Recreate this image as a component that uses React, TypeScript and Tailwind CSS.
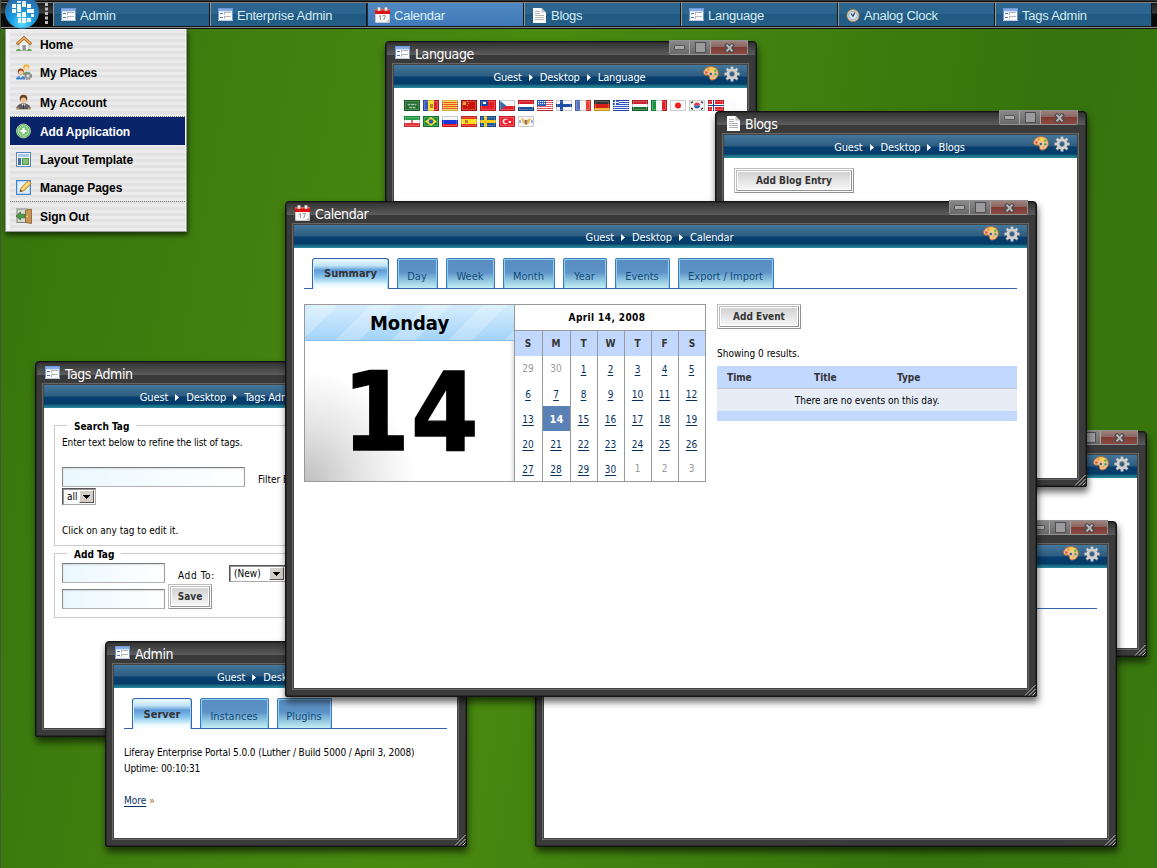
import React, { ReactNode } from "react";

type IconProps = { className?: string };

/* ---------- small icons ---------- */

const PortletIcon = ({ className = "" }: IconProps) => (
  <svg width="15" height="14" viewBox="0 0 15 14" shapeRendering="crispEdges" className={`shrink-0 ${className}`}>
    <rect x="0" y="0" width="15" height="13" fill="#6f97d6" />
    <rect x="1" y="1" width="13" height="2" fill="#88aee8" />
    <rect x="1" y="3" width="13" height="9" fill="#fbfcff" />
    <rect x="1" y="3" width="13" height="1" fill="#d3dff5" />
    <rect x="2" y="5" width="3" height="1" fill="#5476bb" />
    <rect x="2" y="9" width="3" height="1" fill="#5476bb" />
    <rect x="6" y="4" width="7" height="3" fill="#b8b8b8" />
    <rect x="7" y="5" width="6" height="2" fill="#fff" />
    <rect x="6" y="8" width="7" height="3" fill="#b8b8b8" />
    <rect x="7" y="9" width="6" height="2" fill="#fff" />
    <rect x="0" y="12" width="15" height="1" fill="#bfc9dd" />
  </svg>
);

const CalendarIcon = ({ className = "" }: IconProps) => (
  <svg width="15" height="16" viewBox="0 0 15 16" className={`shrink-0 ${className}`}>
    <rect x="0.5" y="6" width="14" height="9.5" rx="0.5" fill="#f4f4f4" stroke="#c8c8c8" />
    <rect x="0" y="2" width="15" height="5" fill="#dc1010" />
    <rect x="0" y="2" width="15" height="1.5" fill="#f25c50" />
    <rect x="2.5" y="0" width="3" height="4" rx="1.2" fill="#eee" stroke="#888" strokeWidth=".6" />
    <rect x="9.5" y="0" width="3" height="4" rx="1.2" fill="#eee" stroke="#888" strokeWidth=".6" />
    <path d="M4 9.5l1.3-1V13M7.5 8.7h3L8.7 13" stroke="#8a8a8a" fill="none" strokeWidth=".9" />
    <path d="M10.5 15.5l4-4v4z" fill="#c9c9c9" />
  </svg>
);

const PageIcon = ({ className = "" }: IconProps) => (
  <svg width="13" height="15" viewBox="0 0 13 15" className={`shrink-0 ${className}`}>
    <path d="M0 0h8.5L13 4.500V15H0z" fill="#fdfdfd" />
    <path d="M8.500 0v4.500H13z" fill="#c5c5c5" />
    <path d="M2 3.500h5M2 5.500h5M2 7.500h9M2 9.500h9M2 11.500h9" stroke="#b4b4b4" strokeWidth="1" />
  </svg>
);

const ClockIcon = () => (
  <svg width="14" height="15" viewBox="0 0 14 15" className="shrink-0">
    <circle cx="7" cy="7.500" r="6.500" fill="#b4905c" />
    <circle cx="7" cy="7.500" r="5.500" fill="#f0dfc0" />
    <circle cx="7" cy="7.500" r="4.400" fill="#cfe2f6" stroke="#7394bd" strokeWidth=".7" />
    <path d="M5 5.500l2 2.600 1.800-3.600" stroke="#2c3b58" strokeWidth="1.100" fill="none" />
  </svg>
);

const PaletteIcon = () => (
  <svg width="16" height="15" viewBox="0 0 16 15">
    <path
      d="M9 .7C4.500.2 1 3 .6 6.200c-.3 2.600 1.800 3.200 3.700 2.900 1.700-.2 2 .8 2.100 2.200.1 1.900 1.300 3 3.600 2.600 3-.5 5.300-3.200 5.400-6.400C15.500 3.700 12.700 1.100 9 .7z"
      fill="#f6c488"
      stroke="#b56a34"
      strokeWidth="1"
    />
    <circle cx="3.400" cy="6.500" r="1.300" fill="#e84a4a" />
    <circle cx="5.600" cy="3.500" r="1.200" fill="#f2923a" />
    <circle cx="9" cy="3" r="1.500" fill="#f9dc1c" />
    <circle cx="12.300" cy="4.800" r="1.300" fill="#56bb45" />
    <circle cx="12.400" cy="8.200" r="1.200" fill="#35a888" />
    <circle cx="10.300" cy="10.800" r="1" fill="#d99a84" />
    <circle cx="7.800" cy="8" r="1.200" fill="#2c5c93" />
  </svg>
);

const teeth = [0, 45, 90, 135, 180, 225, 270, 315];
const GearIcon = () => (
  <svg width="16" height="16" viewBox="0 0 16 16">
    {teeth.map((a) => (
      <path key={a} d="M6.400 3.500L6.800.4h2.400l.4 3.100z" fill="#d2d2d2" stroke="#8d8d8d" strokeWidth=".4" transform={`rotate(${a} 8 8)`} />
    ))}
    <circle cx="8" cy="8" r="3.900" fill="none" stroke="#d2d2d2" strokeWidth="3" />
    <circle cx="8" cy="8" r="2.500" fill="none" stroke="#858585" strokeWidth=".7" />
  </svg>
);

const HomeIcon = () => (
  <svg width="16" height="16" viewBox="0 0 16 16">
    <path d="M3 7v7.500h10V7L8 2.500z" fill="#f1f1ee" stroke="#9a9a92" strokeWidth=".6" />
    <rect x="6.500" y="9" width="3.200" height="5.500" fill="#8f9096" />
    <path d="M.8 8.300L8 1.800l7.200 6.500" fill="none" stroke="#9a5d1d" strokeWidth="3" />
    <path d="M1.200 8L8 1.900 14.800 8" fill="none" stroke="#e0a45c" strokeWidth="1.900" />
    <path d="M0 15c.3-2.600 4-2.800 5 0zM11 15c.6-2.800 4.500-2.600 5 0z" fill="#4ba552" />
  </svg>
);

const PlacesIcon = () => (
  <svg width="16" height="16" viewBox="0 0 16 16">
    <path d="M7 11c0-4.500 7.500-4.500 7.500 0z" fill="#5aa845" />
    <circle cx="10.300" cy="3.200" r="3" fill="#f0b23c" />
    <circle cx="10.500" cy="4.300" r="2" fill="#fbd9b4" />
    <path d="M0 15.500c0-5 9.500-5 9.500 0z" fill="#3f86d8" />
    <path d="M3.500 12l1.300 2 1.400-2z" fill="#fff" />
    <circle cx="4.800" cy="7.500" r="3" fill="#a14a1d" />
    <circle cx="5" cy="8.500" r="2.100" fill="#f7cfa5" />
    <circle cx="12" cy="12" r="3.100" fill="none" stroke="#8e8e8e" strokeWidth="2" strokeDasharray="1.700 .8" />
    <circle cx="12" cy="12" r="2.200" fill="#ddd" stroke="#808080" strokeWidth="1" />
  </svg>
);

const AccountIcon = () => (
  <svg width="15" height="16" viewBox="0 0 15 16">
    <path d="M.8 15c-.8-7 14.200-7 13.400 0z" fill="#606064" stroke="#46464a" strokeWidth=".6" />
    <path d="M5.500 10l2 3.500L9.500 10z" fill="#e2e2e2" />
    <path d="M7.500 10.500v4" stroke="#333" strokeWidth="1.200" />
    <circle cx="7.500" cy="4.500" r="3.800" fill="#6b4423" />
    <circle cx="7.500" cy="6.300" r="2.900" fill="#f0c297" />
    <path d="M0 14.500h3M12 14.500h3" stroke="#c89567" strokeWidth="1.400" />
  </svg>
);

const AddIcon = () => (
  <svg width="15" height="16" viewBox="0 0 15 16">
    <circle cx="7.500" cy="8" r="7" fill="#5fae57" stroke="#b9dfb2" strokeWidth=".8" />
    <circle cx="7.500" cy="8" r="5.300" fill="#7cc172" stroke="#cdebc8" strokeWidth=".9" />
    <path d="M7.500 5v6M4.500 8h6" stroke="#fff" strokeWidth="2.200" />
  </svg>
);

const LayoutIcon = () => (
  <svg width="15" height="15" viewBox="0 0 15 15" shapeRendering="crispEdges">
    <rect width="15" height="15" fill="#5b87bd" />
    <rect x="1" y="1" width="13" height="13" fill="#fff" />
    <rect x="2" y="2" width="11" height="3" fill="#a9c7ea" />
    <rect x="2" y="6" width="3" height="7" fill="#426fae" />
    <rect x="6" y="6" width="7" height="7" fill="#4f9a44" />
    <rect x="7" y="7" width="5" height="5" fill="#82c274" />
  </svg>
);

const EditIcon = () => (
  <svg width="16" height="16" viewBox="0 0 16 16">
    <rect x=".6" y="1.600" width="13.800" height="13.800" fill="#d9ecff" stroke="#3d85cf" strokeWidth="1.200" />
    <path d="M2.500 5h8M2.500 7.500h6M2.500 10h4" stroke="#fff" />
    <path d="M4 12.800l1-4L12.300 1.500l3 3L8 11.700z" fill="#f7c24e" stroke="#b17a1c" strokeWidth=".8" />
    <path d="M6 10.500l7.500-7.500" stroke="#fde7a8" strokeWidth="1.200" />
    <path d="M4 12.800l.6-2.200 1.700 1.600z" fill="#333" />
  </svg>
);

const ExitIcon = () => (
  <svg width="16" height="16" viewBox="0 0 16 16">
    <rect x="1" y="1" width="11" height="13.500" fill="#d7d9d4" stroke="#7f857c" />
    <path d="M9.500 2.500L15.500 1v14.500l-6-1z" fill="#c99555" stroke="#8d5b25" strokeWidth=".8" />
    <circle cx="11" cy="8.500" r=".8" fill="#f9e4a0" />
    <path d="M0 8l4.500-4v2.300H9v3.500H4.500V12z" fill="#4f9a4e" stroke="#2f6b31" strokeWidth=".7" />
  </svg>
);

const Logo = () => (
  <svg width="34" height="29" viewBox="0 0 34 29" className="shrink-0">
    <defs>
      <radialGradient id="orb" cx="50%" cy="85%" r="75%">
        <stop offset="0" stopColor="#5fdcff" />
        <stop offset=".45" stopColor="#1a9be2" />
        <stop offset="1" stopColor="#2b6ba8" />
      </radialGradient>
    </defs>
    <circle cx="17" cy="11.500" r="17" fill="url(#orb)" />
    <g fill="#f4fbff" shapeRendering="crispEdges">
      <path d="M12 1h4v2h-4zM17 1h4v2h-4z" opacity=".85" />
      <path d="M7 4h4v4H7zM12 4h4v4h-4zM17 3h4v4h-4zM22 4h4v4h-4z" />
      <path d="M7 9h4v4H7zM12 8h4v4h-4zM22 9h4v4h-4zM26 9h3v4h-3z" />
      <path d="M12 13h4v4h-4zM17 12h4v5h-4zM26 14h3v3h-3z" />
      <path d="M13 18h3v5h-3zM17 18h4v5h-4zM22 18h4v4h-4z" />
    </g>
  </svg>
);

/* ---------- flags ---------- */

const R = (x: number, y: number, w: number, h: number, f: string) => <rect x={x} y={y} width={w} height={h} fill={f} />;

const flags: ReactNode[] = [
  <g>{R(0, 0, 16, 11, "#1d6a2c")}<path d="M3.500 4.500h9M5 7.500h7" stroke="#a3c6a6" strokeWidth="1.600" strokeDasharray="3 .5" /></g>,
  <g>{R(0, 0, 5, 11, "#3759bb")}{R(5, 0, 6, 11, "#f8dd2e")}{R(11, 0, 5, 11, "#d8222e")}{R(7, 4, 3, 4, "#c47b32")}</g>,
  <g>{R(0, 0, 16, 11, "#fbd24a")}{R(0, 2, 16, 1, "#e8532a")}{R(0, 4, 16, 1, "#e8532a")}{R(0, 6, 16, 1, "#e8532a")}{R(0, 8, 16, 1, "#e8532a")}</g>,
  <g>{R(0, 0, 16, 11, "#c9140c")}{R(2, 2, 3, 3, "#f5a73a")}{R(6, 1, 1, 1, "#f5a73a")}{R(7, 3, 1, 1, "#f5a73a")}{R(6, 5, 1, 1, "#f5a73a")}</g>,
  <g>{R(0, 0, 16, 11, "#e81e26")}{R(0, 0, 8, 6, "#1a45a8")}{R(3, 2, 3, 2, "#fff")}</g>,
  <g>{R(0, 0, 16, 6, "#f6f6f6")}{R(0, 6, 16, 5, "#e02028")}<path d="M0 0l7 5.500L0 11z" fill="#3768a8" /></g>,
  <g>{R(0, 0, 16, 4, "#dd1c2a")}{R(0, 4, 16, 3, "#fff")}{R(0, 7, 16, 4, "#1d4f98")}</g>,
  <g>{R(0, 0, 16, 11, "#fff")}{R(0, 0, 16, 1, "#d2303c")}{R(0, 2, 16, 1, "#e0525c")}{R(0, 4, 16, 1, "#e0525c")}{R(0, 6, 16, 1, "#e0525c")}{R(0, 8, 16, 1, "#e0525c")}{R(0, 10, 16, 1, "#d2303c")}{R(0, 0, 9, 6, "#2a63c8")}<path d="M1 1.500h7M1 3.500h7" stroke="#fff" strokeDasharray="1 1" /></g>,
  <g>{R(0, 0, 16, 11, "#f7f7fb")}{R(4, 0, 3, 11, "#1e4fa3")}{R(0, 4, 16, 3, "#1e4fa3")}</g>,
  <g>{R(0, 0, 5, 11, "#5470c4")}{R(5, 0, 6, 11, "#f6f3f0")}{R(11, 0, 5, 11, "#ee3b34")}</g>,
  <g>{R(0, 0, 16, 4, "#333")}{R(0, 4, 16, 4, "#d62118")}{R(0, 8, 16, 3, "#f2b128")}</g>,
  <g>{R(0, 0, 16, 11, "#f4f6ff")}{R(0, 0, 16, 1, "#2b4fc0")}{R(0, 2, 16, 1, "#2b4fc0")}{R(0, 4, 16, 1, "#2b4fc0")}{R(0, 6, 16, 1, "#2b4fc0")}{R(0, 8, 16, 1, "#2b4fc0")}{R(0, 10, 16, 1, "#2b4fc0")}{R(0, 0, 6, 5, "#2b4fc0")}{R(2, 0, 1, 5, "#fff")}{R(0, 2, 6, 1, "#fff")}</g>,
  <g>{R(0, 0, 16, 4, "#cc2030")}{R(0, 4, 16, 3, "#f5f5f5")}{R(0, 7, 16, 4, "#1e7434")}</g>,
  <g>{R(0, 0, 5, 11, "#1a9340")}{R(5, 0, 6, 11, "#f8f8f8")}{R(11, 0, 5, 11, "#e0212a")}</g>,
  <g>{R(0, 0, 16, 11, "#f8f8f8")}<circle cx="8" cy="5.500" r="3" fill="#f02020" /></g>,
  <g>{R(0, 0, 16, 11, "#f6f6f6")}<path d="M5 5.500a3 3 0 016 0z" fill="#e23a40" /><path d="M5 5.500a3 3 0 006 0z" fill="#2a63b8" /><path d="M2 3l2-1.500M12 1.500L14 3M2 8l2 1.500M12 9.500L14 8" stroke="#222" strokeWidth="1.500" /></g>,
  <g>{R(0, 0, 16, 11, "#e62430")}{R(4, 0, 3, 11, "#fff")}{R(0, 4, 16, 3, "#fff")}{R(5, 0, 1, 11, "#223f92")}{R(0, 5, 16, 1, "#223f92")}</g>,
  <g>{R(0, 0, 16, 4, "#27a04a")}{R(0, 4, 16, 3, "#fbfbfb")}{R(0, 7, 16, 4, "#e4343a")}{R(7, 4, 2, 3, "#e87070")}</g>,
  <g>{R(0, 0, 16, 11, "#188a34")}<path d="M8 1l6 4.500L8 10 2 5.500z" fill="#f6e02c" /><circle cx="8" cy="5.500" r="2.300" fill="#2c58b4" /></g>,
  <g>{R(0, 0, 16, 4, "#f6f6fa")}{R(0, 4, 16, 4, "#1c36d8")}{R(0, 8, 16, 3, "#e81c1c")}</g>,
  <g>{R(0, 0, 16, 3, "#e62a1c")}{R(0, 3, 16, 5, "#fadf1e")}{R(0, 8, 16, 3, "#e62a1c")}{R(4, 4, 3, 3, "#c8743a")}</g>,
  <g>{R(0, 0, 16, 11, "#20559a")}{R(4, 0, 3, 11, "#f6c91e")}{R(0, 4, 16, 3, "#f6c91e")}</g>,
  <g>{R(0, 0, 16, 11, "#f02230")}<circle cx="6.500" cy="5.500" r="2.800" fill="#fff" /><circle cx="7.300" cy="5.500" r="2" fill="#f02230" />{R(10, 5, 2, 2, "#fff")}</g>,
  <g>{R(0, 0, 16, 11, "#f4f4f4")}<path d="M3 2l5 2.500L13 2l-2 5-3 2.500L5 7z" fill="#e6be30" />{R(7, 4, 2, 4, "#8a63b0")}{R(1, 4, 2, 3, "#9aacd8")}{R(13, 4, 2, 3, "#9aacd8")}</g>,
];

const Flag = ({ art }: { art: ReactNode }) => (
  <svg width="16" height="11" viewBox="0 0 16 11">
    {art}
    <rect x="1.500" y="1.500" width="13" height="8" fill="none" stroke="#fff" strokeOpacity=".22" />
    <rect x=".5" y=".5" width="15" height="10" fill="none" stroke="#000" strokeOpacity=".17" />
  </svg>
);

/* ---------- desktop window ---------- */

const WindowButtons = () => (
  <div className="absolute -top-[2px] right-[8px] flex h-[15px] w-[79px] rounded-b-[2px] border border-[#a09c98]/70 bg-[#777]">
    <div className="flex w-[20px] items-center justify-center border-r border-[#a5a5a5] bg-linear-to-b from-[#888] to-[#6a6a6a]">
      <div className="h-[5px] w-[11px] rounded-[1px] border border-[#55585c] bg-[#aaa]" />
    </div>
    <div className="flex w-[21px] items-center justify-center border-r border-[#a5a5a5] bg-linear-to-b from-[#888] to-[#6a6a6a]">
      <div className="size-[11px] border border-[#4a4d52] bg-[#9c9c9c]" />
    </div>
    <div className="flex flex-1 items-center justify-center bg-[linear-gradient(#9c827f_0,#8c6560_45%,#7e3c34_50%,#8a4a43_100%)]">
      <svg width="11" height="10" viewBox="0 0 11 10">
        <path d="M1.500 1L9.500 9M9.500 1L1.500 9" stroke="#484b4f" strokeWidth="4" />
        <path d="M2.500 1.700L8.500 8.300M8.500 1.700L2.500 8.300" stroke="#b8b8b8" strokeWidth="2" />
      </svg>
    </div>
  </div>
);

const Arrow = () => (
  <svg width="4" height="7" viewBox="0 0 4 7" className="-mt-[2px] mr-[7px] ml-[7px]">
    <path d="M0 0l4 3.500L0 7z" fill="#fff" />
  </svg>
);

type WindowProps = { place: string; icon?: ReactNode; title?: string; children?: ReactNode };

function Window({ place, icon, title, children }: WindowProps) {
  return (
    <section
      className={`absolute flex flex-col rounded-t-[4px] rounded-b-[2px] border border-[#141414] bg-[#3a3a3a] pr-[7px] pb-[6px] pl-[6px] shadow-[1px_5px_7px_rgba(0,0,0,0.6),inset_0_0_0_1px_#282828] ${place}`}
    >
      <div className="absolute inset-x-px top-px h-[12px] rounded-t-[3px] bg-linear-to-b from-[#343434] to-[#5d5d5d]" />
      <header className="relative flex h-[21px] shrink-0 items-center pt-[3px] pl-[3px]">
        <span className="-mt-[2px]">{icon}</span>
        <h2 className="ml-[5px] text-[14px] leading-[18px] tracking-[-0.03em] whitespace-nowrap text-white">{title}</h2>
      </header>
      <WindowButtons />
      <div className="flex min-h-0 flex-1 flex-col border border-[#666] bg-[#444] p-px">
        <nav className="flex h-[23px] shrink-0 bg-[linear-gradient(#44779b_0,#2d5c81_11px,#053e6e_12px,#063c68_19px,#14627f_20px,#2b8ba0_23px)]">
          <div className="flex-1" />
          <div className="-mr-[5px] flex items-center pt-[4px] text-[11px] tracking-[-0.012em] whitespace-nowrap text-white">
            {title && (
              <>
                Guest
                <Arrow />
                Desktop
                <Arrow />
                {title}
              </>
            )}
          </div>
          <div className="flex flex-1 justify-end gap-[5px] pt-px pr-[7px]">
            <PaletteIcon />
            <GearIcon />
          </div>
        </nav>
        <div className="min-h-0 flex-1 overflow-hidden bg-white">{children}</div>
      </div>
      <svg width="12" height="12" viewBox="0 0 12 12" className="absolute right-0 bottom-0">
        <path d="M1 11.500L11.500 1M5 11.500L11.500 5M8.500 11.500l3-3" stroke="#222" strokeWidth="2" />
        <path d="M1 11.500L11.500 1M5 11.500L11.500 5M8.500 11.500l3-3" stroke="#d8d8d8" strokeWidth="1" />
      </svg>
    </section>
  );
}

/* ---------- form pieces ---------- */

const PushButton = ({ children, size }: { children: ReactNode; size: string }) => (
  <button
    className={`block border-[3px] border-double border-t-[#bdbdbd] border-r-[#929292] border-b-[#929292] border-l-[#bdbdbd] bg-linear-to-b from-[#d0d0d0] to-[#f8f8f8] bg-clip-padding p-0 text-center text-[10px] leading-none font-bold text-[#333] shadow-[inset_0_0_0_1px_#fff] ${size}`}
  >
    {children}
  </button>
);

const TextField = ({ size }: { size: string }) => (
  <div className={`border border-t-[#7c7c7c] border-r-[#a0a0a0] border-b-[#b2b2b2] border-l-[#8c8c8c] bg-linear-to-r from-[#eaf8ff] to-white shadow-[inset_0_1px_2px_rgba(0,0,0,0.12)] ${size}`} />
);

const Select = ({ label, size }: { label: string; size: string }) => (
  <div className={`flex shrink-0 items-stretch border border-t-[#555] border-r-[#aaa] border-b-[#aaa] border-l-[#555] bg-white text-[10px] shadow-[inset_1px_1px_0_#999] ${size}`}>
    <span className="flex flex-1 items-center pt-px pl-[4px] leading-none">{label}</span>
    <span className="m-px flex w-[15px] items-center justify-center border border-t-white border-r-[#555] border-b-[#555] border-l-white bg-[#d4d0c8]">
      <svg width="7" height="4" viewBox="0 0 7 4" shapeRendering="crispEdges">
        <path d="M0 0h7L3.500 4z" fill="#000" />
      </svg>
    </span>
  </div>
);

const TabStrip = ({ active, tabs }: { active: { label: string; w: string }; tabs: { label: string; w: string }[] }) => (
  <div className="flex h-[31px] items-end gap-2 border-b border-[#3563a9] pl-2 text-[11px]">
    <div
      className={`-mb-px flex h-[31px] items-center justify-center rounded-t-[3px] border border-b-0 border-[#3a62b0] bg-[linear-gradient(#f1fcfd_0,#bfe3f5_22%,#5e9ad8_38%,#8cc8ec_62%,#e8f9fd_85%,#fff_100%)] pt-px font-bold text-[#333] shadow-[inset_1px_1px_0_#d8f6fb,inset_-1px_0_0_#9bdcf2] ${active.w}`}
    >
      {active.label}
    </div>
    {tabs.map((t) => (
      <div
        key={t.label}
        className={`flex h-[30px] items-center justify-center rounded-t-[2px] border border-b-0 border-[#4577bb] bg-[linear-gradient(#5a8cc0_0,#5c92c6_45%,#8ac0de_70%,#c4eef2_100%)] pt-[7px] pr-px text-[#134a78] shadow-[inset_1px_1px_0_#86d2f1,inset_-1px_0_0_#86d2f1] ${t.w}`}
      >
        {t.label}
      </div>
    ))}
  </div>
);

/* ---------- portlets ---------- */

const weekHeads = ["S", "M", "T", "W", "T", "F", "S"];
const monthDays: { n: number; out?: boolean }[] = [
  { n: 29, out: true },
  { n: 30, out: true },
  ...Array.from({ length: 30 }, (_, i) => ({ n: i + 1 })),
  { n: 1, out: true },
  { n: 2, out: true },
  { n: 3, out: true },
];

const MiniMonth = () => (
  <div className="flex w-[190px] flex-col">
    <div className="flex h-[26px] items-center justify-center border-b border-[#999] bg-white pr-[6px] text-[10px] font-bold tracking-[0.04em]">April 14, 2008</div>
    <div className="grid grid-cols-[28px_28px_27px_27px_27px_27px_26px]">
      {weekHeads.map((d, i) => (
        <div key={i} className={`flex h-[25px] items-center justify-center bg-[#c3d8ff] text-[10px] font-bold text-[#333] ${i < 6 ? "border-r border-[#999] pr-px" : ""}`}>
          {d}
        </div>
      ))}
      {monthDays.map((d, i) => {
        const today = !d.out && d.n === 14;
        return (
          <div
            key={i}
            className={`flex h-[25px] items-center justify-center text-[10px] ${i % 7 < 6 ? "border-r border-[#999]" : ""} ${
              today ? "bg-[#5981b5] pt-[3px] text-[11px] font-bold text-white" : d.out ? "pr-px pb-px text-[#999]" : "pt-[2px] pr-px text-[#06345f] underline underline-offset-2"
            }`}
          >
            {d.n}
          </div>
        );
      })}
    </div>
  </div>
);

const CalendarPortlet = () => (
  <div className="p-[10px]">
    <TabStrip
      active={{ label: "Summary", w: "w-[77px]" }}
      tabs={[
        { label: "Day", w: "w-[41px]" },
        { label: "Week", w: "w-[49px]" },
        { label: "Month", w: "w-[52px]" },
        { label: "Year", w: "w-[44px]" },
        { label: "Events", w: "w-[55px]" },
        { label: "Export / Import", w: "w-[96px]" },
      ]}
    />
    <div className="mt-[15px] flex items-start">
      <div className="flex h-[178px] w-[402px] border border-[#999]">
        <div className="flex w-[210px] flex-col border-r border-[#999] bg-[radial-gradient(circle_at_bottom_left,#c0c0c0_0,#e4e4e4_55px,#fff_110px)] shadow-[inset_-4px_0_4px_-3px_rgba(0,0,0,0.18)]">
          <div className="flex h-[36px] shrink-0 items-center justify-center border-b border-[#82bff5] bg-[repeating-linear-gradient(135deg,transparent_0_6px,rgba(255,255,255,0.24)_6px_23px,transparent_23px_40px),linear-gradient(#d6eefe,#a3d3f9)] pt-px text-[20px] font-bold text-black">
            Monday
          </div>
          <div className="flex flex-1 items-center justify-center pt-[4px] pl-[3px] text-[108px] leading-none font-bold tracking-[0.01em] text-black [-webkit-text-stroke:1.3px_black]">14</div>
        </div>
        <MiniMonth />
      </div>
      <div className="ml-[11px] flex-1 text-[10px]">
        <PushButton size="h-[25px] w-[84px]">Add Event</PushButton>
        <p className="mt-[18px] h-[19px] leading-[14px]">Showing 0 results.</p>
        <div className="grid h-[23px] grid-cols-[87px_83px_1fr] items-center border-b border-[#c5c5c5] bg-[#c3d8ff] pl-[10px] font-bold text-[#333]">
          <span>Time</span>
          <span>Title</span>
          <span>Type</span>
        </div>
        <div className="flex h-[22px] items-center justify-center bg-[#e6edf7] pt-px">There are no events on this day.</div>
        <div className="h-[10px] bg-[#c3d8ff]" />
      </div>
    </div>
  </div>
);

const TagsPortlet = () => (
  <div className="px-[10px] pt-[17px] text-[10px] leading-[14px]">
    <div className="flex h-[121px] flex-col items-start border border-[#ccc] pl-[7px]">
      <h3 className="-mt-[6px] ml-[5px] bg-white px-[7px] font-bold">Search Tag</h3>
      <p className="mt-[2px] tracking-[-0.011em]">Enter text below to refine the list of tags.</p>
      <div className="mt-[17px] flex">
        <TextField size="h-[20px] w-[183px]" />
        <span className="mt-[6px] ml-[13px] whitespace-nowrap">Filter By:</span>
      </div>
      <Select label="all" size="mt-px h-[17px] w-[34px]" />
      <p className="mt-[19px]">Click on any tag to edit it.</p>
    </div>
    <div className="mt-[7px] flex h-[65px] flex-col items-start border border-[#ccc] pl-[7px]">
      <h3 className="-mt-[6px] ml-[5px] bg-white px-[7px] font-bold whitespace-nowrap">Add Tag</h3>
      <div className="mt-px flex h-[21px]">
        <TextField size="h-[20px] w-[103px]" />
        <span className="mt-[6px] ml-[13px] w-[51px] tracking-[0.06em] whitespace-nowrap">Add To:</span>
        <Select label="(New)" size="mt-[2px] h-[17px] w-[57px]" />
      </div>
      <div className="flex items-end gap-[3px]">
        <TextField size="h-[20px] w-[103px]" />
        <PushButton size="h-[25px] w-[44px]">Save</PushButton>
      </div>
    </div>
  </div>
);

const AdminPortlet = () => (
  <div className="p-[10px] text-[10px] leading-[16px]">
    <TabStrip active={{ label: "Server", w: "w-[60px]" }} tabs={[{ label: "Instances", w: "w-[69px]" }, { label: "Plugins", w: "w-[55px]" }]} />
    <p className="mt-[16px] tracking-[-0.009em] whitespace-nowrap">Liferay Enterprise Portal 5.0.0 (Luther / Build 5000 / April 3, 2008)</p>
    <p className="tracking-[-0.018em]">Uptime: 00:10:31</p>
    <p className="mt-[16px]">
      <a className="text-[#06345f] underline underline-offset-2">More</a> <span className="text-[#a85a1a]">»</span>
    </p>
  </div>
);

/* ---------- task bar and menu ---------- */

const tasks: { label: string; icon: ReactNode; on?: boolean }[] = [
  { label: "Admin", icon: <PortletIcon /> },
  { label: "Enterprise Admin", icon: <PortletIcon /> },
  { label: "Calendar", icon: <CalendarIcon />, on: true },
  { label: "Blogs", icon: <PageIcon className="mx-px" /> },
  { label: "Language", icon: <PortletIcon /> },
  { label: "Analog Clock", icon: <ClockIcon /> },
  { label: "Tags Admin", icon: <PortletIcon /> },
];

const TaskBar = () => (
  <div className="flex h-[29px] bg-[linear-gradient(#333_0_1px,#0c0c0c_1px_2px,#808080_2px_3px,#1b1b1b_3px,#3c3c3c_13px,#0b0b0b_14px_26px,#111_26px_27px,#8a8a8a_27px_28px,#111_28px)] pl-[5px] font-['Liberation_Sans',sans-serif]">
    <Logo />
    <svg width="14" height="27" viewBox="0 0 14 27" className="shrink-0">
      <path d="M7.500 3v22" stroke="#bbb" strokeWidth="3" strokeDasharray="3 1.500" />
    </svg>
    <div className="mt-[3px] flex h-[23px]">
      {tasks.map((t) => (
        <div
          key={t.label}
          className={`flex w-[157px] items-center border-r border-l border-r-[#151515] pt-px pl-[7px] text-[13px] ${
            t.on ? "border-l-[#1b2c3c] bg-linear-to-b from-[#5088c2] to-[#4079b8] text-[#d9f2fb]" : "border-l-[#96958f] bg-[linear-gradient(#2c668f_0,#2b648e_50%,#205a82_50%,#245d86_100%)] text-[#d4ecf5]"
          }`}
        >
          {t.icon}
          <span className="mt-[2px] ml-[4px] tracking-[-0.018em] whitespace-nowrap">{t.label}</span>
        </div>
      ))}
    </div>
  </div>
);

const menu: { label: string; icon: ReactNode; cls: string }[] = [
  { label: "Home", icon: <HomeIcon />, cls: "h-[28px] text-black" },
  { label: "My Places", icon: <PlacesIcon />, cls: "h-[28px] text-black" },
  { label: "My Account", icon: <AccountIcon />, cls: "h-[31px] border-b border-dotted border-[#777] pt-[2px] text-black" },
  { label: "Add Application", icon: <AddIcon />, cls: "h-[28px] bg-[#0a246a] text-white" },
  { label: "Layout Template", icon: <LayoutIcon />, cls: "h-[28px] text-black" },
  { label: "Manage Pages", icon: <EditIcon />, cls: "h-[29px] border-b border-dotted border-[#777] pb-px text-black" },
  { label: "Sign Out", icon: <ExitIcon />, cls: "h-[28px] text-black" },
];

const DockMenu = () => (
  <div className="absolute top-[29px] left-[5px] h-[203px] w-[182px] border border-t-0 border-[#999] bg-[#f4f0f8] pt-px pr-px pl-[4px] shadow-[1px_3px_5px_rgba(0,0,0,0.6)]">
    <ul className="h-full bg-[repeating-linear-gradient(#ebebeb_0_3px,#e2e2e2_3px_6px)] font-['Liberation_Sans',sans-serif] text-[12px] font-bold">
      {menu.map((m) => (
        <li key={m.label} className={`flex items-center pl-[6px] ${m.cls}`}>
          <span className="w-[24px]">{m.icon}</span>
          <span className="mt-[2px] tracking-[-0.008em]">{m.label}</span>
        </li>
      ))}
    </ul>
  </div>
);

export default function App() {
  return (
    <main className="relative h-[868px] w-[1157px] overflow-hidden border-l border-[#45553c] bg-[linear-gradient(100deg,#36740d_0%,#4a8a10_42%,#36730d_82%,#3a790e_100%)] font-['DejaVu_Sans_Condensed','DejaVu_Sans',sans-serif] text-black">
      <div className="absolute inset-0 -left-px">
        <TaskBar />
        <Window place="left-[385px] top-[41px] h-[336px] w-[372px]" icon={<PortletIcon />} title="Language">
          <div className="flex flex-wrap gap-x-[3px] gap-y-[5px] p-[10px] pt-[12px]">
            {flags.map((f, i) => (
              <Flag key={i} art={f} />
            ))}
          </div>
        </Window>
        <Window place="left-[835px] top-[431px] h-[226px] w-[312px]" />
        <Window place="left-[535px] top-[521px] h-[326px] w-[582px]">
          <div className="mx-[10px] mt-[40px] h-px bg-[#3563a9]" />
        </Window>
        <Window place="left-[715px] top-[111px] h-[376px] w-[372px]" icon={<PageIcon className="ml-[2px]" />} title="Blogs">
          <div className="p-[10px]">
            <PushButton size="h-[25px] w-[120px]">Add Blog Entry</PushButton>
          </div>
        </Window>
        <Window place="left-[35px] top-[361px] h-[376px] w-[372px]" icon={<PortletIcon />} title="Tags Admin">
          <TagsPortlet />
        </Window>
        <Window place="left-[105px] top-[641px] h-[206px] w-[362px]" icon={<PortletIcon />} title="Admin">
          <AdminPortlet />
        </Window>
        <Window place="left-[285px] top-[201px] h-[496px] w-[752px]" icon={<CalendarIcon />} title="Calendar">
          <CalendarPortlet />
        </Window>
        <DockMenu />
      </div>
    </main>
  );
}
